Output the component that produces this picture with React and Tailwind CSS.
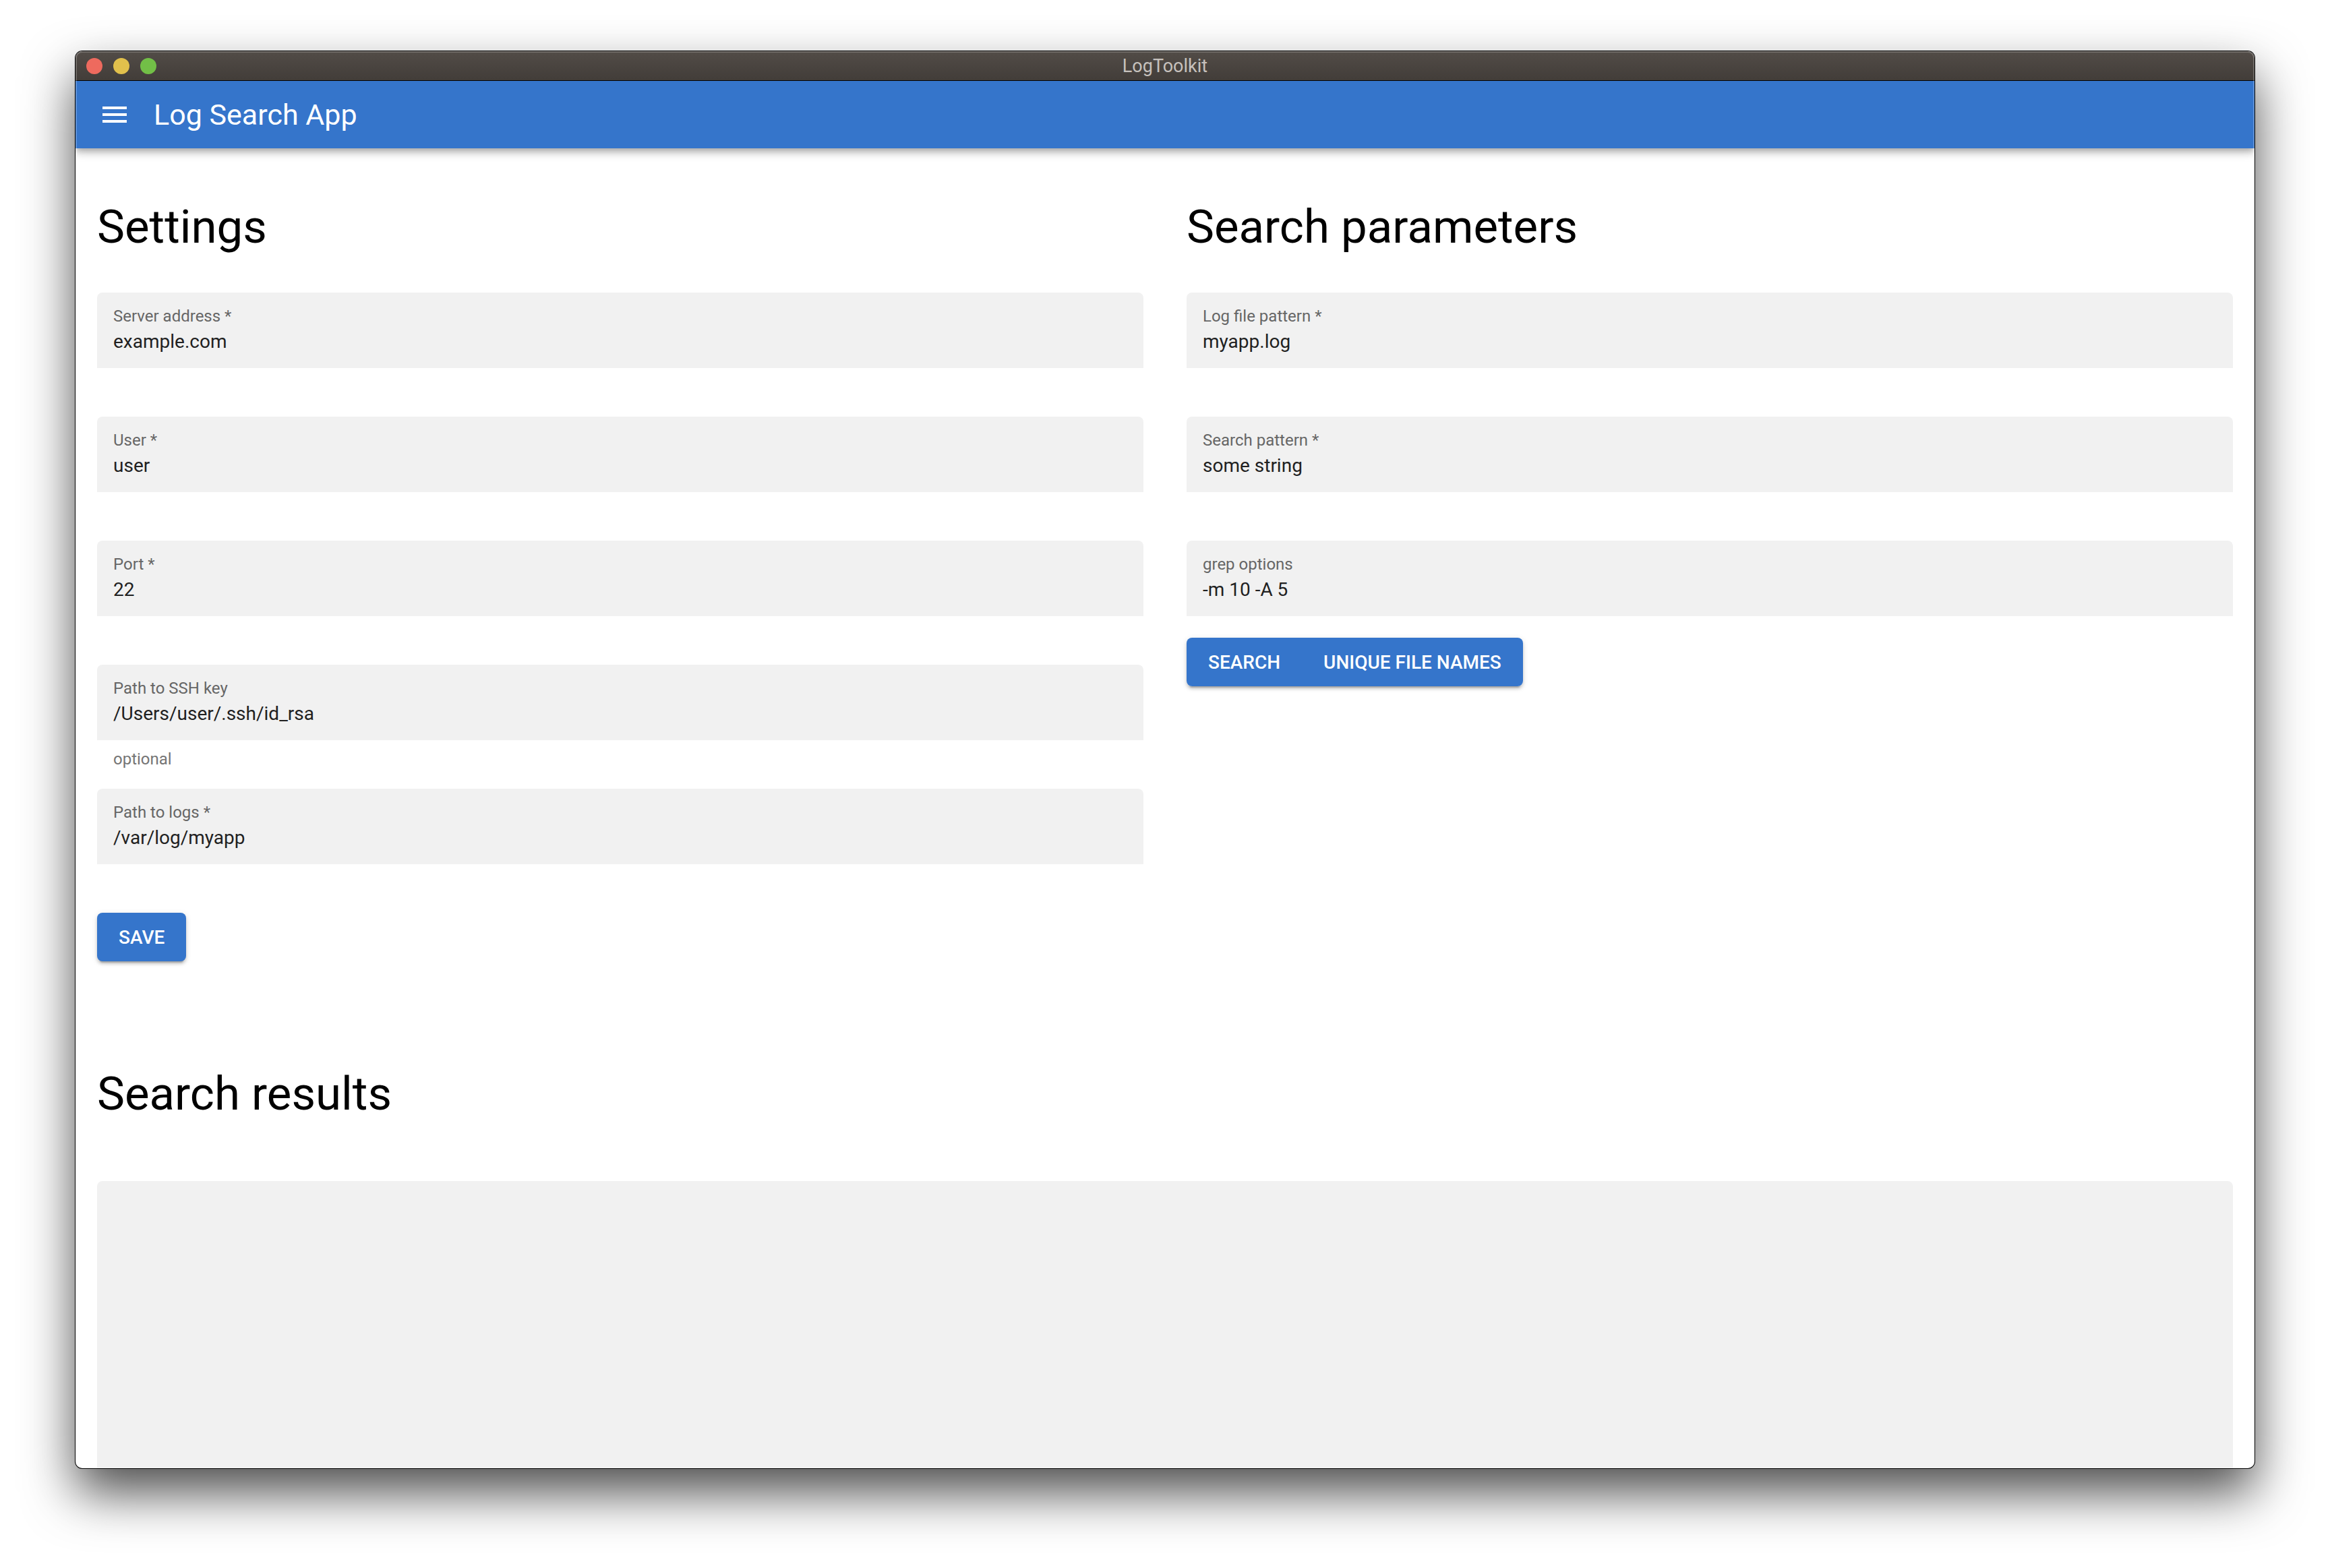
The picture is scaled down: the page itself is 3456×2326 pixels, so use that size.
import { useState } from "react";

function Field({ id, label, initial, helper }) {
  const [value, setValue] = useState(initial);
  return (
    <div>
      <div className="flex h-28 flex-col gap-1 rounded-t-lg bg-[#f1f1f1] px-6 pt-5">
        <label htmlFor={id} className="text-2xl leading-[30px] text-[#666666]">
          {label}
        </label>
        <input
          id={id}
          type="text"
          value={value}
          onChange={(e) => setValue(e.target.value)}
          aria-describedby={helper ? `${id}-helper` : undefined}
          className="h-[38px] w-full bg-transparent text-[28px] leading-[38px] text-[#212121] outline-none"
        />
      </div>
      {helper && (
        <p id={`${id}-helper`} className="-mb-11 px-6 pt-3 text-2xl leading-8 text-[#757575]">
          {helper}
        </p>
      )}
    </div>
  );
}

function Heading({ children }) {
  return <h2 className="py-14 text-[69px] leading-[82px] text-black">{children}</h2>;
}

const raised =
  "shadow-[0_6px_2px_-4px_rgba(0,0,0,0.2),0_4px_4px_0_rgba(0,0,0,0.14),0_2px_10px_0_rgba(0,0,0,0.12)]";
const buttonText = "h-[72px] px-8 pt-0.5 text-[28px] leading-9 font-medium uppercase text-white bg-[#3575cb]";

export default function App() {
  return (
    <div className="flex min-h-screen flex-col bg-white px-28 pt-[76px] pb-[148px] font-['Roboto',sans-serif]">
      <div className="relative flex flex-1 flex-col rounded-[10px] bg-white shadow-[0_0_0_1px_#000,0_36px_76px_rgba(0,0,0,0.7)]">
        <div className="grid h-11 grid-cols-3 items-center rounded-t-[10px] border-b border-black bg-linear-to-b from-[#524c47] to-[#423d39] px-4">
          <div className="flex gap-4">
            <button type="button" aria-label="Close" className="size-6 rounded-full bg-[#ee6a5e]" />
            <button type="button" aria-label="Minimize" className="size-6 rounded-full bg-[#e1c04c]" />
            <button type="button" aria-label="Zoom" className="size-6 rounded-full bg-[#72bf47]" />
          </div>
          <h1 className="text-center text-[27px] leading-8 text-[#c6c1bd]">LogToolkit</h1>
        </div>

        <div className="overflow-hidden pb-5">
          <header className="flex h-[100px] items-center gap-[34px] bg-[#3575cb] px-[34px] text-white shadow-[0_4px_8px_-2px_rgba(0,0,0,0.2),0_8px_10px_0_rgba(0,0,0,0.14),0_2px_20px_0_rgba(0,0,0,0.12)]">
            <button type="button" aria-label="Open menu" className="size-12">
              <svg viewBox="0 0 24 24" className="size-12" fill="currentColor" aria-hidden="true">
                <path d="M3 18h18v-2H3v2zm0-5h18v-2H3v2zm0-7v2h18V6H3z" />
              </svg>
            </button>
            <span className="text-[43px] leading-[50px]">Log Search App</span>
          </header>
        </div>

        <main className="flex flex-1 flex-col overflow-hidden rounded-b-[10px] px-8">
          <div className="grid grid-cols-2 gap-16 pb-[100px]">
            <form onSubmit={(e) => e.preventDefault()}>
              <Heading>Settings</Heading>
              <div className="flex flex-col items-stretch gap-[72px]">
                <Field id="server" label="Server address *" initial="example.com" />
                <Field id="user" label="User *" initial="user" />
                <Field id="port" label="Port *" initial="22" />
                <Field id="ssh-key" label="Path to SSH key" initial="/Users/user/.ssh/id_rsa" helper="optional" />
                <Field id="logs" label="Path to logs *" initial="/var/log/myapp" />
                <div className="flex">
                  <button type="submit" className={`rounded-lg ${buttonText} ${raised}`}>
                    Save
                  </button>
                </div>
              </div>
            </form>

            <form onSubmit={(e) => e.preventDefault()}>
              <Heading>Search parameters</Heading>
              <div className="flex flex-col gap-[72px]">
                <Field id="file-pattern" label="Log file pattern *" initial="myapp.log" />
                <Field id="search-pattern" label="Search pattern *" initial="some string" />
                <Field id="grep" label="grep options" initial="-m 10 -A 5" />
              </div>
              <div className={`mt-8 inline-flex rounded-lg ${raised}`}>
                <button type="submit" className={`rounded-l-lg ${buttonText}`}>
                  Search
                </button>
                <button type="button" className={`rounded-r-lg ${buttonText}`}>
                  Unique file names
                </button>
              </div>
            </form>
          </div>

          <section className="flex flex-1 flex-col">
            <Heading>Search results</Heading>
            <textarea
              aria-label="Search results"
              readOnly
              className="mt-8 min-h-96 w-full flex-1 resize-none rounded-t-lg bg-[#f1f1f1] px-6 py-5 text-[28px] leading-9 text-[#212121] outline-none"
            />
          </section>
        </main>

        <div className="pointer-events-none absolute inset-0 rounded-[10px] shadow-[inset_0_0_0_2px_rgba(255,255,255,0.2)]" />
      </div>
    </div>
  );
}
